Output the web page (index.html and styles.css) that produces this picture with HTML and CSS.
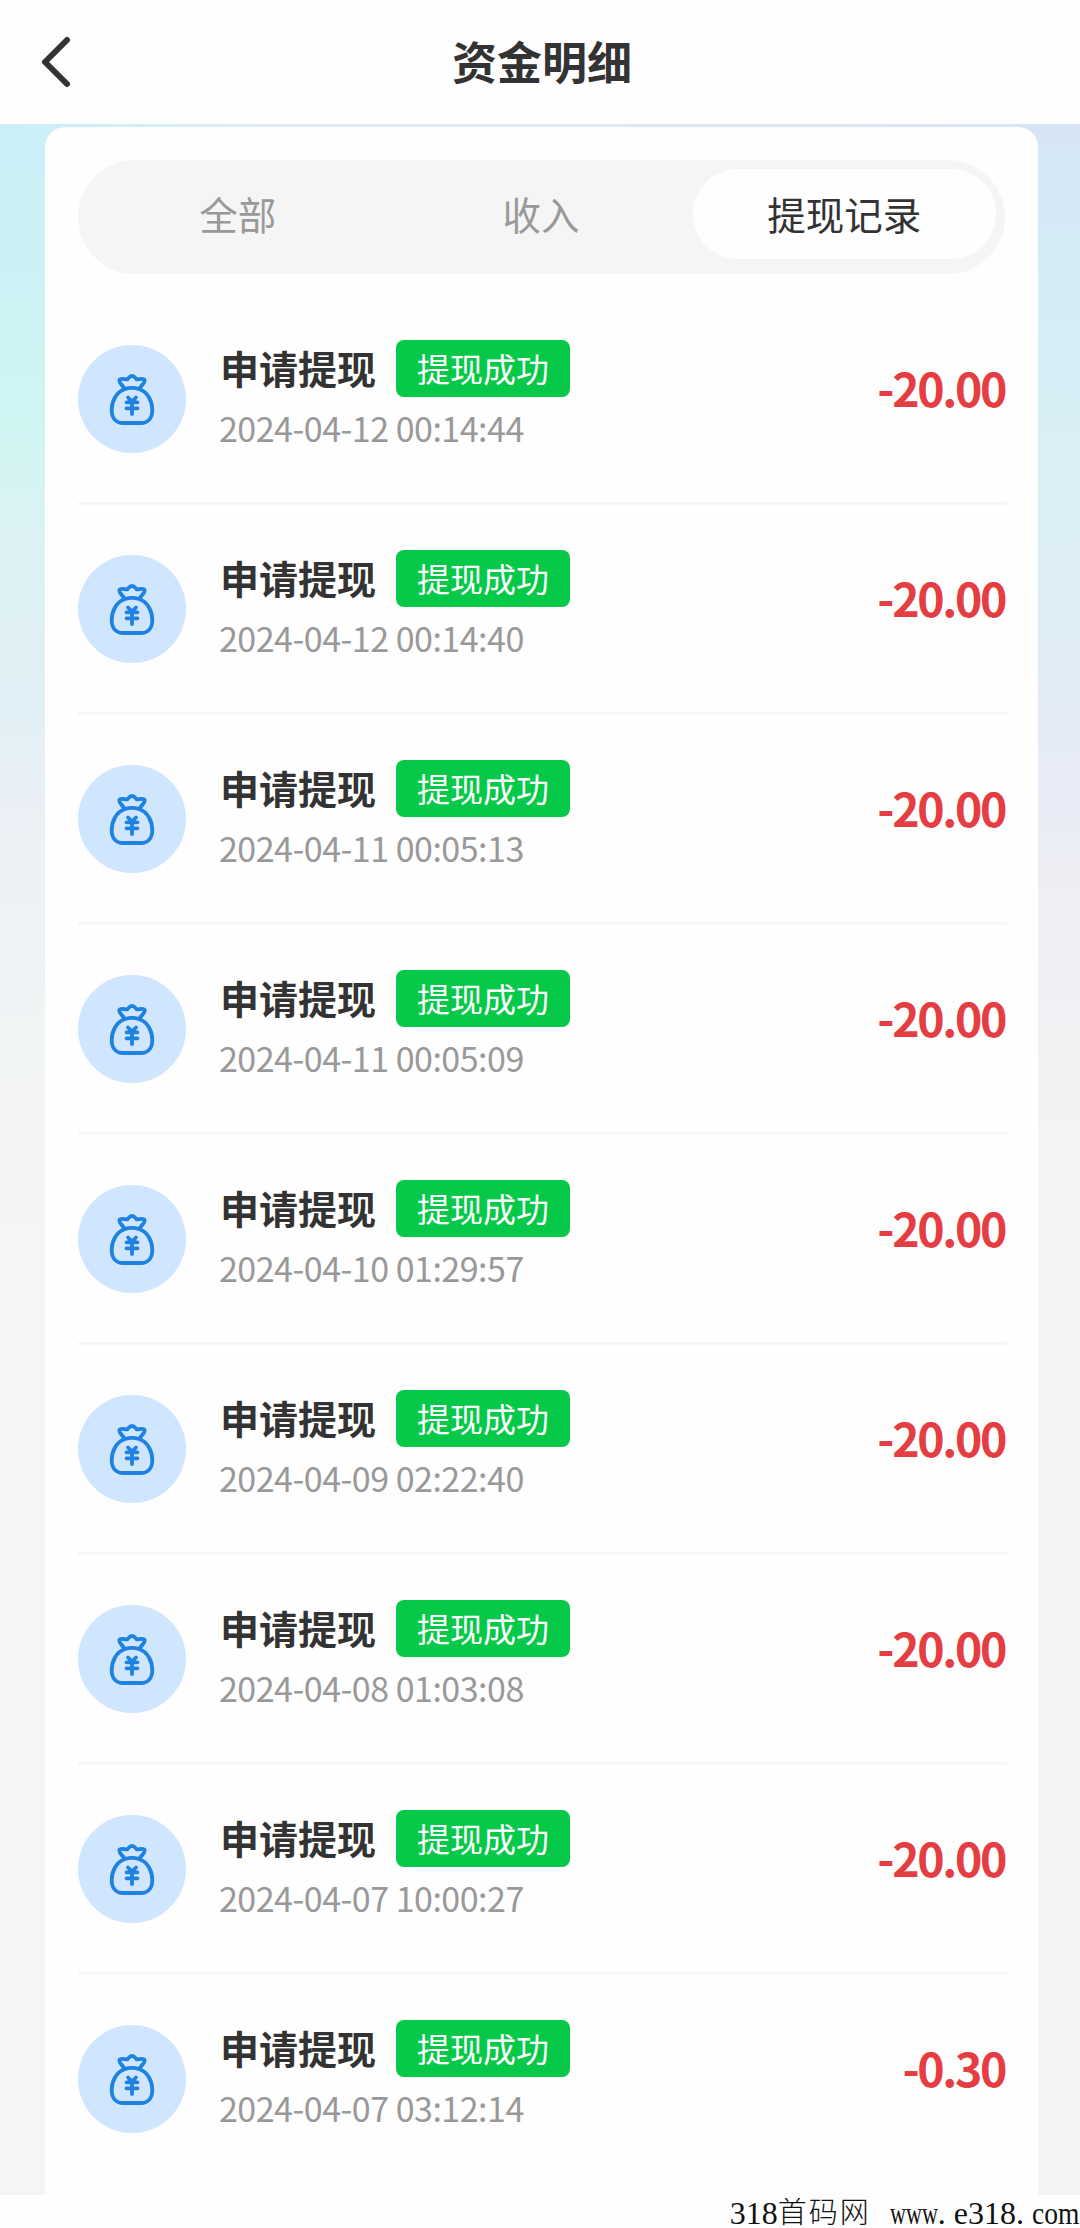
FILE: index.html
```html
<!DOCTYPE html>
<html lang="zh-CN">
<head>
<meta charset="utf-8">
<title>资金明细</title>
<link rel="stylesheet" href="styles.css">
</head>
<body>
<svg class="defs" width="0" height="0">
  <symbol id="bag" viewBox="0 0 54 54" overflow="visible">
    <g fill="none" stroke="#1f82e2" stroke-width="3.8" stroke-linecap="round" stroke-linejoin="round">
      <path d="M20 15C24.500 13.600 29.500 13.600 34 15C43 18 47.300 27.500 47.300 36C47.300 44 43 49 36 49H18C11 49 6.700 44 6.700 36C6.700 27.500 11 18 20 15Z"/>
      <path d="M19.500 14.800C17.800 11 14 9.500 14.300 6.300C15 3.600 19.500 5.300 22.300 5.300C23.500 4.500 24.200 2 27 2C29.800 2 30.500 4.500 31.700 5.300C34.500 5.300 39 3.600 39.700 6.300C40 9.500 36.200 11 34.500 14.800"/>
      <path d="M23 23.500L27 27.500L31 23.500M27 27.500V40M21.500 28.300H32.500M21.500 34.300H32.500"/>
    </g>
  </symbol>
</svg>
<header class="header">
  <svg class="back" viewBox="0 0 30 52"><path d="M26 4L4 26L26 48"/></svg>
  <h1 class="title">资金明细</h1>
</header>
<main class="page">
  <section class="card">
    <nav class="tabs">
      <span class="tab">全部</span>
      <span class="tab">收入</span>
      <span class="tab active">提现记录</span>
    </nav>
    <ul class="list">
      <li class="row"><span class="icon"><svg><use href="#bag"/></svg></span><div class="info"><div class="line"><b class="name">申请提现</b><span class="badge">提现成功</span></div><time class="time">2024-04-12 00:14:44</time></div><span class="amount">-20.00</span></li>
      <li class="row"><span class="icon"><svg><use href="#bag"/></svg></span><div class="info"><div class="line"><b class="name">申请提现</b><span class="badge">提现成功</span></div><time class="time">2024-04-12 00:14:40</time></div><span class="amount">-20.00</span></li>
      <li class="row"><span class="icon"><svg><use href="#bag"/></svg></span><div class="info"><div class="line"><b class="name">申请提现</b><span class="badge">提现成功</span></div><time class="time">2024-04-11 00:05:13</time></div><span class="amount">-20.00</span></li>
      <li class="row"><span class="icon"><svg><use href="#bag"/></svg></span><div class="info"><div class="line"><b class="name">申请提现</b><span class="badge">提现成功</span></div><time class="time">2024-04-11 00:05:09</time></div><span class="amount">-20.00</span></li>
      <li class="row"><span class="icon"><svg><use href="#bag"/></svg></span><div class="info"><div class="line"><b class="name">申请提现</b><span class="badge">提现成功</span></div><time class="time">2024-04-10 01:29:57</time></div><span class="amount">-20.00</span></li>
      <li class="row"><span class="icon"><svg><use href="#bag"/></svg></span><div class="info"><div class="line"><b class="name">申请提现</b><span class="badge">提现成功</span></div><time class="time">2024-04-09 02:22:40</time></div><span class="amount">-20.00</span></li>
      <li class="row"><span class="icon"><svg><use href="#bag"/></svg></span><div class="info"><div class="line"><b class="name">申请提现</b><span class="badge">提现成功</span></div><time class="time">2024-04-08 01:03:08</time></div><span class="amount">-20.00</span></li>
      <li class="row"><span class="icon"><svg><use href="#bag"/></svg></span><div class="info"><div class="line"><b class="name">申请提现</b><span class="badge">提现成功</span></div><time class="time">2024-04-07 10:00:27</time></div><span class="amount">-20.00</span></li>
      <li class="row"><span class="icon"><svg><use href="#bag"/></svg></span><div class="info"><div class="line"><b class="name">申请提现</b><span class="badge">提现成功</span></div><time class="time">2024-04-07 03:12:14</time></div><span class="amount">-0.30</span></li>
    </ul>
  </section>
</main>
<footer class="footer"><span>318</span><span class="cn">首码网</span><span class="www">www</span><span class="dot">.</span><span class="site">e318</span><span class="dot">.</span><span class="com">com</span></footer>
</body>
</html>
```

FILE: styles.css
```css
* { box-sizing: border-box; }
body {
  margin: 0;
  width: 1080px;
  height: 2228px;
  overflow: hidden;
  background: #fefefe;
  color: #333;
  font-family: "Noto Sans CJK SC", sans-serif;
}
.defs { display: block; }
.header {
  height: 124px;
  display: grid;
  grid-template-columns: 100px 1fr 100px;
  align-items: center;
}
.back {
  width: 30px;
  height: 52px;
  margin-left: 41px;
  fill: none;
  stroke: #333;
  stroke-width: 6;
  stroke-linecap: round;
  stroke-linejoin: round;
}
.title {
  margin: 0;
  padding: 0 0 2px 4px;
  text-align: center;
  font-size: 45px;
  line-height: 64px;
  font-weight: 700;
}
.page {
  height: 2071px;
  padding: 3px 42px 0 45px;
  background:
    linear-gradient(to right, #cbeff7, #e2e9ee 35%, #d6e6f6) top / 100% 3px no-repeat,
    linear-gradient(#cbeff7 0, #cff5f3 300px, #ddf2f4 416px, #e1f0f6 590px, #eaf0f5 680px, #f1f4f5 890px, #f5f5f5 1100px) left / 50% 100% no-repeat,
    linear-gradient(#d6e5f5 0, #d4edf6 165px, #dbeff5 360px, #e0ecf6 550px, #e9ebf7 670px, #eeeff3 760px, #f4f4f5 1050px) right / 50% 100% no-repeat;
}
.card {
  height: 2068px;
  padding: 33px 31px 0 33px;
  border-radius: 20px 20px 0 0;
  background: #fefefe;
}
.tabs {
  height: 114px;
  width: 927px;
  display: grid;
  grid-template-columns: 1fr 1fr 1fr;
  padding: 9px 9px 15px 8px;
  border-radius: 57px;
  background: #f5f5f5;
}
.tab {
  display: flex;
  align-items: center;
  justify-content: center;
  padding-bottom: 2px;
  border-radius: 45px;
  color: #999;
  font-size: 38.5px;
  line-height: 50px;
}
.tab.active { background: #fefefe; color: #333; }
.list { margin: 21px 0 0; padding: 0; list-style: none; }
.row {
  height: 210px;
  display: flex;
  padding-top: 45px;
  border-bottom: 3px solid #f6f6f6;
}
.row:last-child { border-bottom: 0; }
.icon {
  width: 108px;
  height: 108px;
  margin-top: 5px;
  padding-top: 4px;
  display: flex;
  align-items: center;
  justify-content: center;
  border-radius: 50%;
  background: #d0e6ff;
}
.icon svg { width: 54px; height: 54px; overflow: visible; }
.info { flex: 1; margin-left: 34px; }
.line { display: flex; align-items: center; gap: 20px; height: 57px; }
.name { font-size: 39px; line-height: 57px; padding-bottom: 2px; }
.badge {
  width: 174px;
  height: 57px;
  border-radius: 8px;
  background: #06c949;
  color: #fff;
  font-size: 33px;
  line-height: 57px;
  text-align: center;
}
.time { display: block; font-size: 34px; letter-spacing: -.5px; line-height: 50px; margin: 6px 0 0 -1px; color: #999; }
.amount {
  margin: 17px 2px 0 0;
  font-size: 46.5px;
  line-height: 60px;
  letter-spacing: -2.4px;
  font-weight: 700;
  color: #e43d42;
}
.footer {
  height: 33px;
  display: flex;
  justify-content: flex-end;
  color: #111;
  font-family: "Liberation Serif", "Noto Sans CJK SC", serif;
  font-size: 32px;
  line-height: 36px;
}
.footer span { white-space: nowrap; transform-origin: left; }
.footer .cn { width: 112px; font-size: 29px; letter-spacing: 2px; font-weight: 300; }
.www { width: 48px; transform: scaleX(.69); }
.dot { width: 16px; }
.com { width: 48px; transform: scaleX(.86); }
```
